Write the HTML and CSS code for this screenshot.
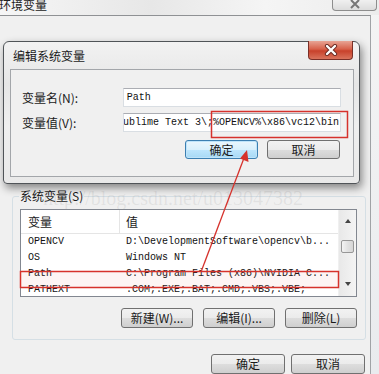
FILE: index.html
```html
<!DOCTYPE html>
<html lang="zh-CN">
<head>
  <meta charset="UTF-8">
  <title>环境变量</title>
  <link rel="stylesheet" href="styles.css">
</head>
<body>
  <!-- Outer window: 环境变量 -->
  <div class="env-window">
    <div class="env-titlebar">
      <span class="env-title">环境变量</span>
      <span class="env-close">
        <svg width="14" height="10" viewBox="0 0 14 10"><path d="M3 0 L11 8 M11 0 L3 8" stroke="#777" stroke-width="2"/></svg>
      </span>
    </div>

    <div class="env-body">
      <fieldset class="group">
        <legend>系统变量(S)</legend>

        <div class="listbox">
          <div class="list-main">
            <div class="list-head">
              <span class="col-name">变量</span>
              <span class="col-value">值</span>
            </div>
            <div class="list-row"><span class="col-name">OPENCV</span><span class="col-value">D:\DevelopmentSoftware\opencv\b...</span></div>
            <div class="list-row"><span class="col-name">OS</span><span class="col-value">Windows NT</span></div>
            <div class="list-row"><span class="col-name">Path</span><span class="col-value">C:\Program Files (x86)\NVIDIA C...</span></div>
            <div class="list-row"><span class="col-name">PATHEXT</span><span class="col-value">.COM;.EXE;.BAT;.CMD;.VBS;.VBE;</span></div>
          </div>
          <div class="scrollbar">
            <span class="arrow up"></span>
            <span class="thumb"></span>
            <span class="arrow down"></span>
          </div>
        </div>

        <div class="btn-row">
          <button class="btn">新建(W)...</button>
          <button class="btn">编辑(I)...</button>
          <button class="btn">删除(L)</button>
        </div>
      </fieldset>

      <div class="btn-row bottom-row">
        <button class="btn wide">确定</button>
        <button class="btn wide">取消</button>
      </div>
    </div>
  </div>

  <div class="watermark">http://blog.csdn.net/u013047382</div>

  <!-- Dialog: 编辑系统变量 -->
  <div class="dialog">
    <div class="dialog-titlebar">
      <span class="dialog-title">编辑系统变量</span>
      <span class="dialog-close">
        <svg width="16" height="12" viewBox="0 0 16 12">
          <path d="M4 2 L12 10 M12 2 L4 10" stroke="#6b2a22" stroke-width="4.2" stroke-linecap="round"/>
          <path d="M4 2 L12 10 M12 2 L4 10" stroke="#fff" stroke-width="2.4" stroke-linecap="round"/>
        </svg>
      </span>
    </div>
    <div class="dialog-panel">
      <div class="field">
        <label class="field-label">变量名(N):</label>
        <div class="field-input"><span>Path</span></div>
      </div>
      <div class="field">
        <label class="field-label">变量值(V):</label>
        <div class="field-input scrolled"><span>Sublime Text 3\;%OPENCV%\x86\vc12\bin</span></div>
      </div>
      <div class="btn-row dialog-buttons">
        <button class="btn wide default">确定</button>
        <button class="btn wide">取消</button>
      </div>
    </div>
  </div>

  <!-- red annotations -->
  <svg class="annot" width="379" height="374" viewBox="0 0 379 374">
    <rect x="211.5" y="111.5" width="136" height="26" fill="none" stroke="#d6322c" stroke-width="1.5"/>
    <rect x="20.5" y="271.5" width="318" height="16" fill="rgba(230,120,120,0.08)" stroke="#d6322c" stroke-width="1.5"/>
    <line x1="201" y1="272" x2="244" y2="158" stroke="#d6322c" stroke-width="1.3"/>
    <path d="M247 150 L248.5 162 L240 158.5 Z" fill="#d6322c"/>
  </svg>
</body>
</html>
```

FILE: styles.css
```css
/* Global */
body {
  margin: 0;
  width: 379px;
  height: 374px;
  overflow: hidden;
  position: relative;
  font-family: "Noto Sans CJK SC", sans-serif;
  font-size: 12px;
  color: #1a1a1a;
  background: #eef1f4;
}

/* Outer window */
.env-window {
  display: flex;
  flex-direction: column;
  height: 374px;
  background: linear-gradient(to bottom, #f4f4f4, #e9ebee);
}

.env-titlebar {
  height: 20px;
  display: flex;
  align-items: flex-start;
  justify-content: space-between;
  background: linear-gradient(to right, #f6f6f6, #e7e7e7 40%, #f5f5f5 70%, #ececec);
}

.env-title {
  margin-left: -1px;
  margin-top: -3px;
  font-size: 12px;
  line-height: 16px;
  color: #222;
}

.env-close {
  width: 43px;
  height: 10px;
  margin-right: 2px;
  border: 1px solid #8d8d8d;
  border-top: none;
  border-radius: 0 0 4px 4px;
  background: linear-gradient(to bottom, #f0f0f0, #dcdcdc);
  display: flex;
  justify-content: center;
  align-items: flex-start;
}

.env-body {
  flex: 1;
  width: 371px;
  border-top: 1px solid #8f9194;
  border-right: 1px solid #a0a3a6;
  background: #f0f0f0;
  box-sizing: border-box;
}

/* Group box */
.group {
  margin: 172px 0 0 12px;
  width: 354px;
  box-sizing: border-box;
  border: 1px solid #d5dfe5;
  border-radius: 3px;
  padding: 5px 8px 11px 7px;
}

.group legend {
  padding: 0 1px;
  margin-left: -1px;
  line-height: 16px;
  font-size: 12px;
}

/* List view */
.listbox {
  display: flex;
  height: 88px;
  box-sizing: border-box;
  border: 1px solid #828790;
  background: #fff;
  overflow: hidden;
}

.list-main {
  flex: 1;
}

.list-head {
  display: flex;
  height: 23px;
  align-items: center;
  border-bottom: 1px solid #e5e5e5;
  font-size: 12px;
}

.list-head .col-name {
  border-right: 1px solid #e5e5e5;
  height: 23px;
  line-height: 23px;
}

.list-row {
  display: flex;
  height: 16px;
  line-height: 16px;
  font-family: "Liberation Mono", monospace;
  font-size: 10px;
  color: #111;
}

.col-name {
  width: 99px;
  padding-left: 7px;
  box-sizing: border-box;
  flex-shrink: 0;
}

.col-value {
  padding-left: 6px;
  white-space: nowrap;
}

.scrollbar {
  width: 17px;
  display: flex;
  flex-direction: column;
  align-items: center;
  background: linear-gradient(to right, #e8e8e8, #f4f4f4);
  border-left: 1px solid #f0f0f0;
}

.arrow {
  width: 0;
  height: 0;
  border-left: 3px solid transparent;
  border-right: 3px solid transparent;
}

.arrow.up {
  margin-top: 9px;
  border-bottom: 4px solid #444;
}

.arrow.down {
  margin-top: 29px;
  border-top: 4px solid #444;
}

.thumb {
  margin-top: 17px;
  width: 13px;
  height: 13px;
  box-sizing: border-box;
  border: 1px solid #979797;
  border-radius: 2px;
  background: linear-gradient(to right, #f3f3f3, #e2e2e2 50%, #d6d6d6);
}

/* Buttons */
.btn-row {
  display: flex;
  justify-content: flex-end;
  gap: 10px;
  margin-top: 11px;
}

.btn {
  width: 72px;
  height: 20px;
  padding: 0;
  border: 1px solid #707070;
  border-radius: 3px;
  background: linear-gradient(to bottom, #f2f2f2 0%, #ebebeb 50%, #dddddd 51%, #cfcfcf 100%);
  font-family: "Noto Sans CJK SC", sans-serif;
  font-size: 12px;
  line-height: 16px;
  color: #1a1a1a;
}

.btn.wide {
  width: 74px;
}

.bottom-row {
  gap: 6px;
  margin: 14px 5px 0 0;
}

.btn.default {
  border-color: #3c7fb1;
  box-shadow: inset 0 0 0 1px #bfe4fa;
  background: linear-gradient(to bottom, #eaf6fd 0%, #d9f0fc 50%, #bee6fd 51%, #a7d9f5 100%);
}

/* Watermark */
.watermark {
  position: absolute;
  left: 43px;
  top: 188px;
  font-family: "Liberation Serif", serif;
  font-size: 20px;
  line-height: 20px;
  color: rgba(150, 150, 150, 0.16);
  pointer-events: none;
}

/* Edit dialog */
.dialog {
  position: absolute;
  left: 3px;
  top: 41px;
  width: 357px;
  height: 143px;
  box-sizing: border-box;
  border: 1px solid #505458;
  border-radius: 6px 6px 4px 4px;
  padding: 0 5px 6px 6px;
  background: linear-gradient(to bottom, #f2f2f2, #e6e6e6 30%, #efefef 60%, #e9e9e9);
  box-shadow: 2px 4px 8px rgba(0, 0, 0, 0.45);
  display: flex;
  flex-direction: column;
}

.dialog-titlebar {
  height: 27px;
  display: flex;
  justify-content: space-between;
  align-items: flex-start;
}

.dialog-title {
  margin-left: 3px;
  margin-top: 6px;
  line-height: 16px;
  font-size: 12px;
  color: #1a1a1a;
}

.dialog-close {
  width: 45px;
  height: 19px;
  margin-right: 1px;
  margin-top: -1px;
  box-sizing: border-box;
  border: 1px solid #7a2f27;
  border-top: none;
  border-radius: 0 0 4px 4px;
  background: linear-gradient(to bottom, #e8a494 0%, #d7614a 45%, #c8412b 55%, #d9735c 100%);
  display: flex;
  justify-content: center;
  align-items: center;
}

.dialog-panel {
  flex: 1;
  box-sizing: border-box;
  border: 1px solid #a3a6aa;
  background: #f0f0f0;
  padding: 18px 12px 0 11px;
}

.field {
  display: flex;
  align-items: center;
  margin-bottom: 6px;
}

.field-label {
  width: 101px;
  line-height: 16px;
  font-size: 12px;
}

.field-input {
  width: 219px;
  height: 19px;
  box-sizing: border-box;
  border: 1px solid #d9dee3;
  border-top-color: #abadb3;
  background: #fff;
  padding: 0 3px;
  display: flex;
  align-items: center;
  overflow: hidden;
  font-family: "Liberation Mono", monospace;
  font-size: 10px;
  white-space: nowrap;
  color: #111;
}

.field-input.scrolled {
  justify-content: flex-end;
  padding-right: 1px;
}

.dialog-buttons {
  margin-top: 8px;
  gap: 9px;
  margin-right: 1px;
}

.dialog-buttons .btn {
  width: 73px;
  height: 19px;
}

/* Annotations */
.annot {
  position: absolute;
  left: 0;
  top: 0;
  pointer-events: none;
}
```
